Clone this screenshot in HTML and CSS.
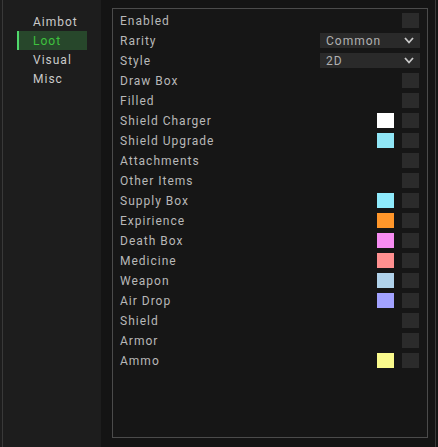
FILE: index.html
```html
<!DOCTYPE html>
<html lang="en">
<head>
  <meta charset="UTF-8">
  <title>Loot</title>
  <link rel="stylesheet" href="styles.css">
</head>
<body>
  <div class="window">
    <!-- tabs -->
    <div class="sidebar">
      <div class="nav-item">Aimbot</div>
      <div class="nav-item active">Loot</div>
      <div class="nav-item">Visual</div>
      <div class="nav-item">Misc</div>
    </div>

    <div class="main">
      <div class="panel">
        <div class="row"><span class="label">Enabled</span><span class="check"></span></div>
        <div class="row">
          <span class="label">Rarity</span>
          <div class="select"><span>Common</span>
            <svg width="10" height="7" viewBox="0 0 10 7"><path d="M1 1 L5 5.5 L9 1" fill="none" stroke="#c8c8c8" stroke-width="1.8"/></svg>
          </div>
        </div>
        <div class="row">
          <span class="label">Style</span>
          <div class="select"><span>2D</span>
            <svg width="10" height="7" viewBox="0 0 10 7"><path d="M1 1 L5 5.5 L9 1" fill="none" stroke="#c8c8c8" stroke-width="1.8"/></svg>
          </div>
        </div>
        <div class="row"><span class="label">Draw Box</span><span class="check"></span></div>
        <div class="row"><span class="label">Filled</span><span class="check"></span></div>
        <div class="row"><span class="label">Shield Charger</span><span class="swatch" style="background:#ffffff"></span><span class="check"></span></div>
        <div class="row"><span class="label">Shield Upgrade</span><span class="swatch" style="background:#90e6f6"></span><span class="check"></span></div>
        <div class="row"><span class="label">Attachments</span><span class="check"></span></div>
        <div class="row"><span class="label">Other Items</span><span class="check"></span></div>
        <div class="row"><span class="label">Supply Box</span><span class="swatch" style="background:#8eeafc"></span><span class="check"></span></div>
        <div class="row"><span class="label">Expirience</span><span class="swatch" style="background:#ff962a"></span><span class="check"></span></div>
        <div class="row"><span class="label">Death Box</span><span class="swatch" style="background:#f78cf2"></span><span class="check"></span></div>
        <div class="row"><span class="label">Medicine</span><span class="swatch" style="background:#ff9090"></span><span class="check"></span></div>
        <div class="row"><span class="label">Weapon</span><span class="swatch" style="background:#b0d2ea"></span><span class="check"></span></div>
        <div class="row"><span class="label">Air Drop</span><span class="swatch" style="background:#a2a2ff"></span><span class="check"></span></div>
        <div class="row"><span class="label">Shield</span><span class="check"></span></div>
        <div class="row"><span class="label">Armor</span><span class="check"></span></div>
        <div class="row"><span class="label">Ammo</span><span class="swatch" style="background:#fafa8c"></span><span class="check"></span></div>
      </div>
    </div>
  </div>
</body>
</html>
```

FILE: styles.css
```css
body {
  margin: 0;
  background: #141414;
  font-family: Roboto, "Liberation Sans", sans-serif;
  font-size: 12px;
  letter-spacing: 1px;
}
.window {
  display: flex;
  width: 438px;
  height: 447px;
}
.sidebar {
  width: 101px;
  background: #1d1d1d;
  box-shadow: inset 2px 0 #1d1d1d, inset 3px 0 #393939;
  padding-top: 12px;
  box-sizing: border-box;
}
.nav-item {
  margin-left: 17px;
  width: 70px;
  height: 19px;
  line-height: 20px;
  padding-left: 16px;
  box-sizing: border-box;
  color: #cacaca;
}
.nav-item.active {
  background: #27472b;
  border-left: 2px solid #50d86c;
  padding-left: 14px;
  color: #3ec23e;
}
.main {
  flex: 1;
  padding: 8px 0 9px 11px;
  box-shadow: inset -2px 0 #141414, inset -3px 0 #3a3a3a;
}
.panel {
  width: 316px;
  height: 430px;
  box-sizing: border-box;
  border: 1px solid #4b4b4b;
  background: #161616;
  padding: 1px 8px 0 7px;
}
.row {
  display: flex;
  align-items: center;
  height: 20px;
}
.label {
  flex: 1;
  padding-top: 2px;
  color: #b8b8b8;
}
.check {
  width: 17px;
  height: 15px;
  background: #2b2b2b;
}
.swatch {
  width: 17px;
  height: 15px;
  margin-right: 8px;
}
.select {
  display: flex;
  align-items: center;
  justify-content: space-between;
  width: 100px;
  height: 15px;
  margin-right: -1px;
  padding: 1px 6px 0;
  box-sizing: border-box;
  background: #2a2a2a;
  color: #b0b0b0;
}
```
